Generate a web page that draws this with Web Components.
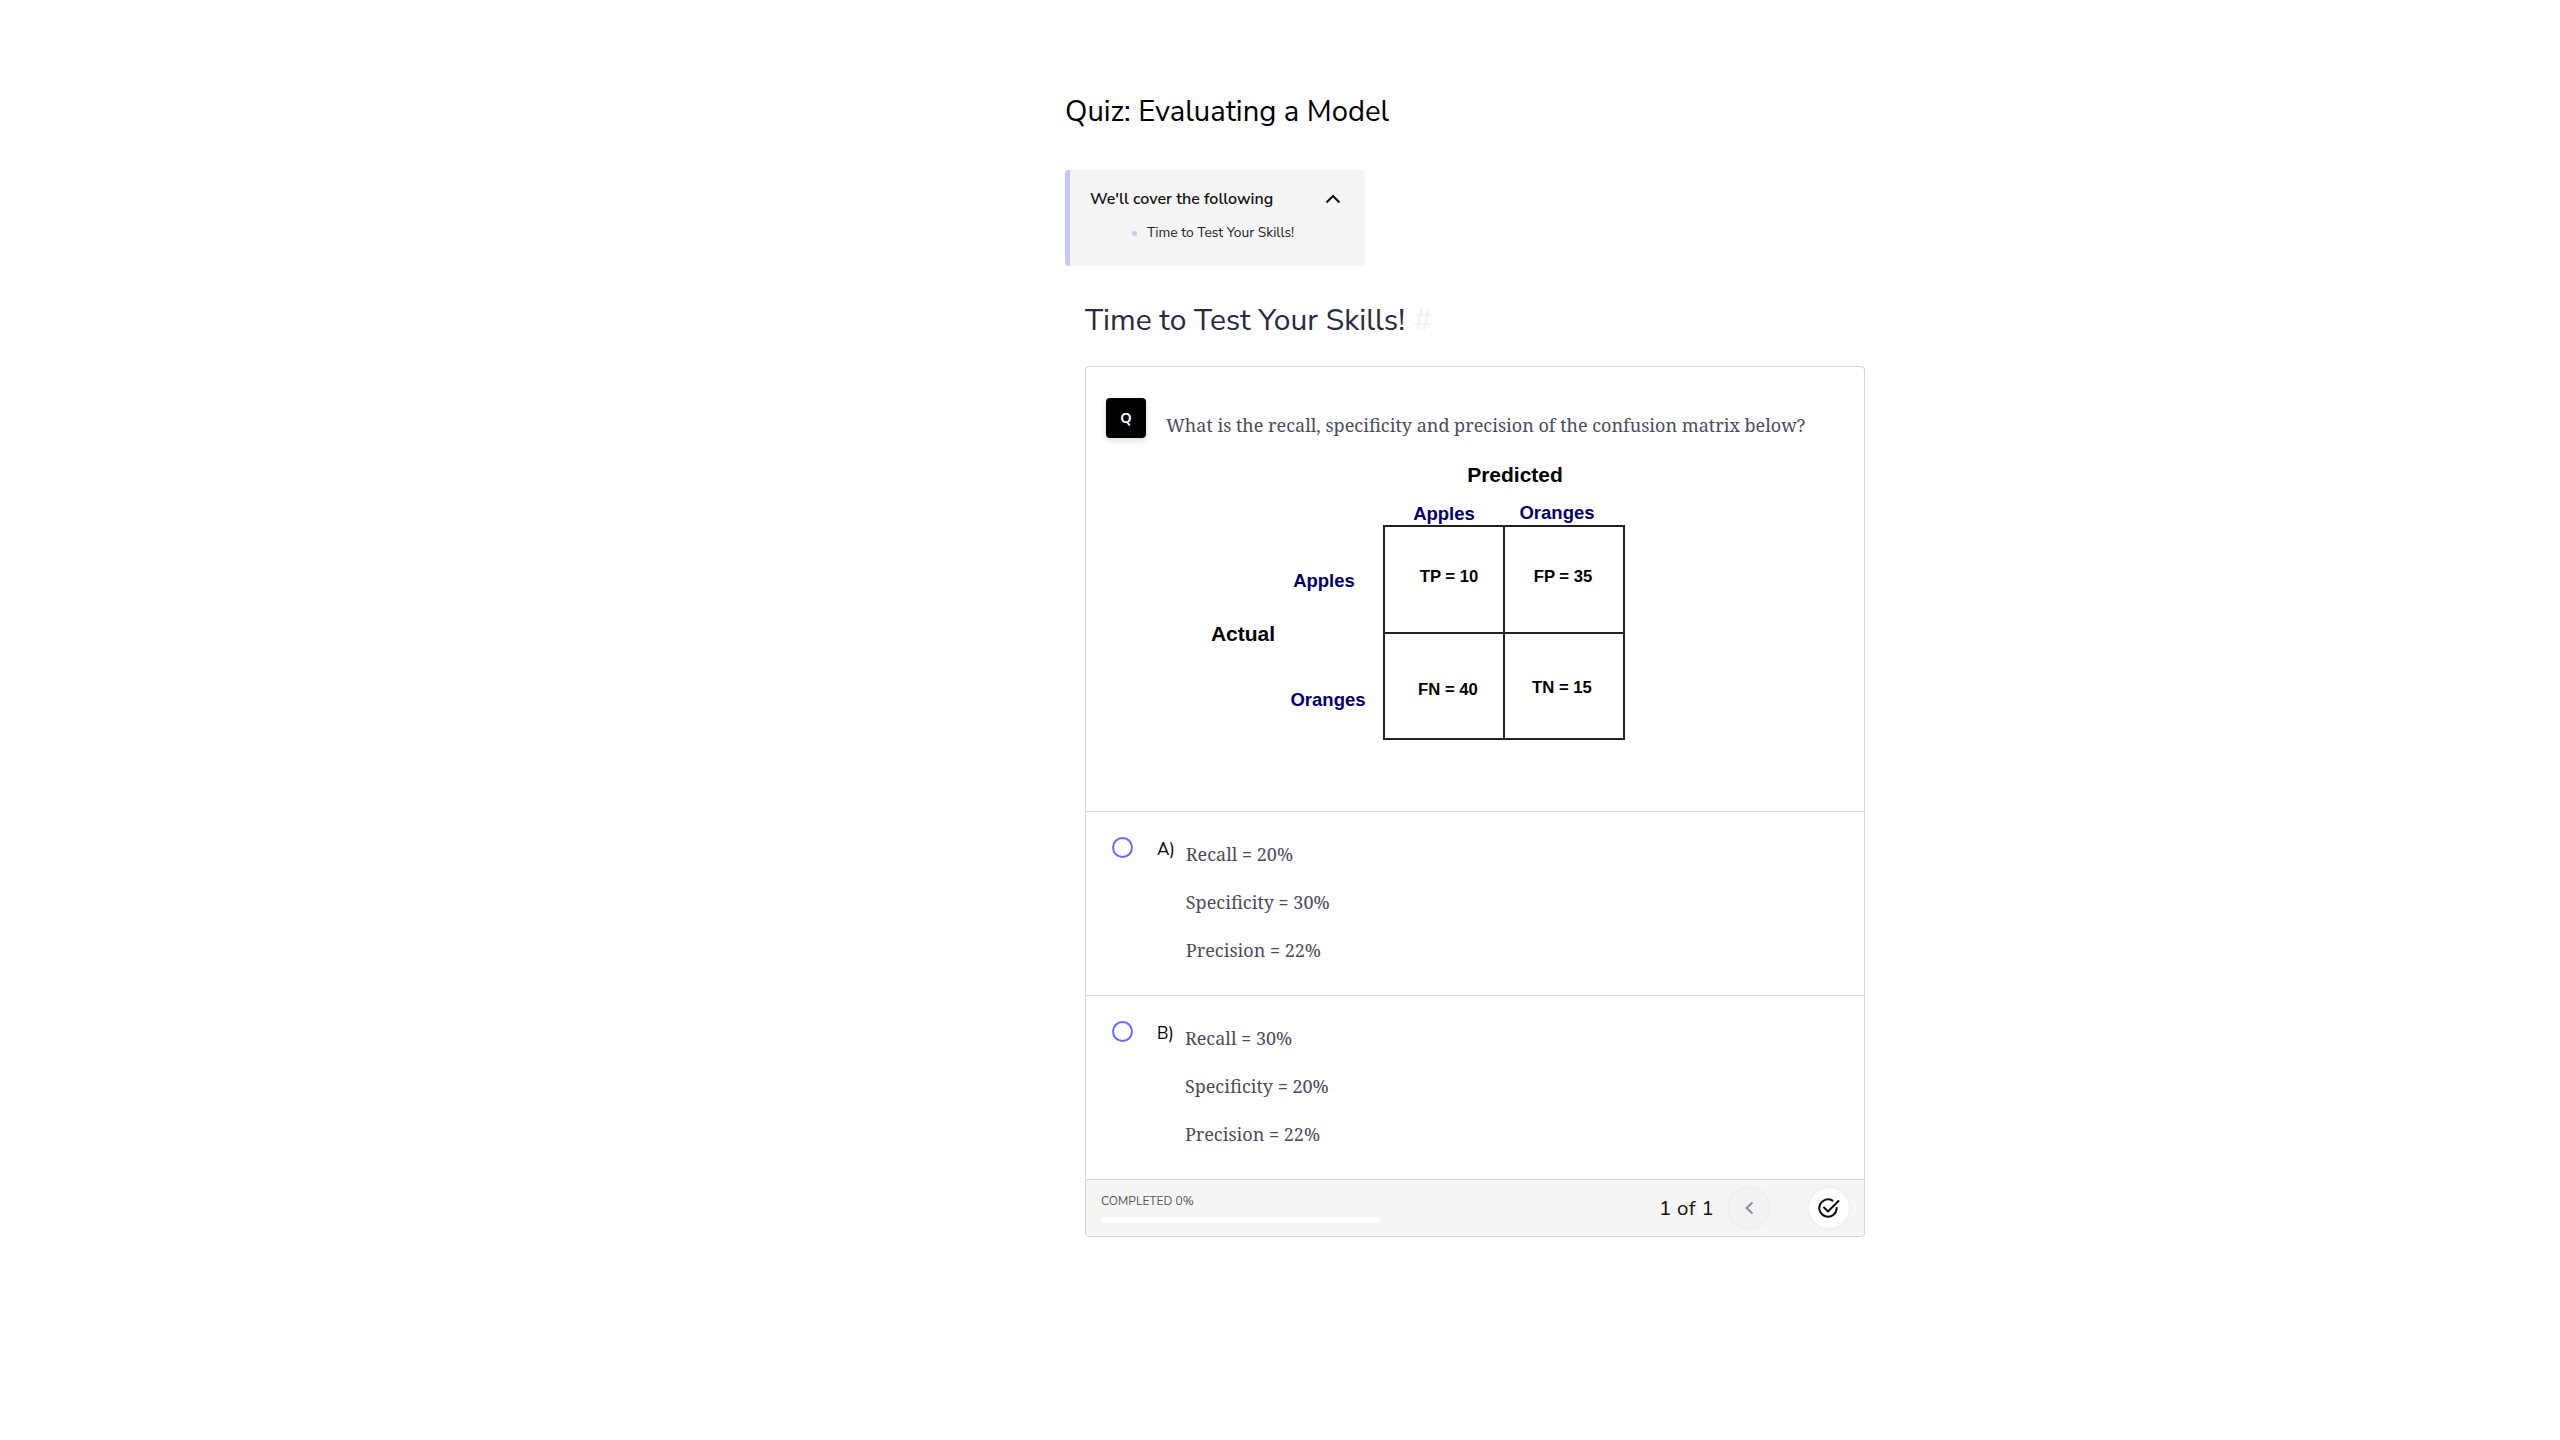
<!DOCTYPE html>
<html lang="en">
<head>
<meta charset="utf-8">
<title>Quiz: Evaluating a Model</title>
<style>
  html, body { margin: 0; background: #fff; }
</style>
</head>
<body>
<quiz-page></quiz-page>
<script>
const SANS = '"Nunito Sans", Lato, "Noto Sans", sans-serif'
const SERIF = '"Noto Serif", "DejaVu Serif", serif'

const pageTemplate = document.createElement('template')
pageTemplate.innerHTML = `
  <style>
    :host { display: block; padding: 91px 0 0 1065px; font-family: ${SANS}; }
    h1 { margin: 0; font-size: 29.2px; line-height: 40px; font-weight: 400; color: #000; }
    h2 { margin: 0; padding: 35px 0 25px 20px; font-size: 30px; line-height: 40px; font-weight: 400; color: #2a2a45; }
    h2 span { color: #f3f3f5; margin-left: 1px; }
    quiz-card { margin-left: 20px; }
  </style>
  <h1>Quiz: Evaluating a Model</h1>
  <cover-box title="We'll cover the following">Time to Test Your Skills!</cover-box>
  <h2>Time to Test Your Skills! <span>#</span></h2>
  <quiz-card></quiz-card>
`
customElements.define('quiz-page', class extends HTMLElement {
  constructor () {
    super()
    this.attachShadow({ mode: 'open' }).appendChild(pageTemplate.content.cloneNode(true))
  }
})

const coverTemplate = document.createElement('template')
coverTemplate.innerHTML = `
  <style>
    :host { display: block; box-sizing: border-box; width: 300px; height: 96px; margin-top: 39px; padding: 17px 24px 0 20px; background: #f5f5f5; border-left: 5px solid #c6c6ff; border-radius: 4px; color: #111; }
    header { display: flex; justify-content: space-between; align-items: center; height: 24px; font-size: 16px; font-weight: 600; }
    svg { width: 16px; height: 10px; display: block; }
    ul { margin: 12px 0 0; padding: 0 0 0 42px; display: flex; align-items: center; gap: 10px; font-size: 13.8px; line-height: 20px; list-style: none; color: #222; }
    i { width: 5px; height: 5px; border-radius: 50%; background: #c6c6ff; }
  </style>
  <header>
    <span id="title"></span>
    <svg viewBox="0 0 16 10" fill="none" stroke="#111" stroke-width="2"><path d="M1.5 8.5 8 2l6.500 6.500"/></svg>
  </header>
  <ul><i></i><li><slot></slot></li></ul>
`
customElements.define('cover-box', class extends HTMLElement {
  constructor () {
    super()
    this.attachShadow({ mode: 'open' }).appendChild(coverTemplate.content.cloneNode(true))
    this.shadowRoot.querySelector('#title').textContent = this.getAttribute('title')
  }
})

const matrixTemplate = document.createElement('template')
matrixTemplate.innerHTML = `
  <style>
    :host { display: block; width: 520px; height: 300px; margin: 0 0 0 97.5px; }
    svg { display: block; }
    text { font-family: "Liberation Sans", Arial, sans-serif; font-weight: 700; text-anchor: middle; dominant-baseline: central; fill: #000; }
    .big { font-size: 21px; }
    .head { font-size: 18.5px; fill: #000066; }
    .cell { font-size: 16.7px; }
    path { fill: none; stroke: #222; stroke-width: 2; }
  </style>
  <svg width="520" height="300" viewBox="1205 460 520 300">
    <path d="M1385 527h240v213h-240zM1505 527v213M1385 634h240"/>
    <text class="big" x="1516" y="475">Predicted</text>
    <text class="head" x="1445" y="514">Apples</text>
    <text class="head" x="1558" y="513">Oranges</text>
    <text class="head" x="1325" y="581">Apples</text>
    <text class="big" x="1244" y="634">Actual</text>
    <text class="head" x="1329" y="700">Oranges</text>
    <text class="cell" x="1450" y="577">TP = 10</text>
    <text class="cell" x="1564" y="577">FP = 35</text>
    <text class="cell" x="1449" y="690">FN = 40</text>
    <text class="cell" x="1563" y="688">TN = 15</text>
  </svg>
`
customElements.define('confusion-matrix', class extends HTMLElement {
  constructor () {
    super()
    this.attachShadow({ mode: 'open' }).appendChild(matrixTemplate.content.cloneNode(true))
  }
})

const optionTemplate = document.createElement('template')
optionTemplate.innerHTML = `
  <style>
    :host { display: flex; box-sizing: border-box; height: 184px; padding: 25px 0 0 26px; border-top: 1px solid #d4d4d4; }
    .radio { flex: none; box-sizing: border-box; width: 21px; height: 21px; border: 2px solid #6a6aff; border-radius: 50%; }
    .letter { flex: none; margin-left: 24px; margin-right: 11px; padding-top: 2px; font: 17px/22px ${SANS}; color: #000; }
    .lines { font: 18px/24px ${SERIF}; color: #4b4b5c; padding-top: 5px; }
    ::slotted(p) { margin: 0 0 24px; }
  </style>
  <div class="radio"></div>
  <div class="letter"></div>
  <div class="lines"><slot></slot></div>
`
customElements.define('quiz-option', class extends HTMLElement {
  constructor () {
    super()
    this.attachShadow({ mode: 'open' }).appendChild(optionTemplate.content.cloneNode(true))
    this.shadowRoot.querySelector('.letter').textContent = this.getAttribute('letter')
  }
})

const footerTemplate = document.createElement('template')
footerTemplate.innerHTML = `
  <style>
    :host { display: flex; align-items: center; height: 57px; padding: 0 15px 0 15px; box-sizing: border-box; background: #f5f5f5; border-top: 1px solid #d4d4d4; font-family: ${SANS}; }
    .progress { width: 280px; margin-top: -1px; }
    .label { font-size: 12px; line-height: 16px; color: #555; }
    .bar { height: 6px; margin-top: 8px; border-radius: 3px; background: #fff; }
    .count { margin-left: auto; font-size: 20.5px; letter-spacing: .3px; color: #111; }
    button { width: 40px; height: 40px; padding: 0; border: 0; border-radius: 50%; display: flex; align-items: center; justify-content: center; box-shadow: 0 0 4px rgba(0,0,0,.07); }
    .prev { margin-left: 15px; background: #f3f3f4; }
    .done { margin-left: 40px; background: #fff; }
  </style>
  <div class="progress">
    <div class="label">COMPLETED 0%</div>
    <div class="bar"></div>
  </div>
  <span class="count">1 of 1</span>
  <button class="prev" aria-label="Previous">
    <svg width="20" height="20" viewBox="0 0 20 20" fill="none" stroke="#8a8a94" stroke-width="2"><path d="M13.500 4.500 7.500 10l6 5.500"/></svg>
  </button>
  <button class="done" aria-label="Finish">
    <svg width="24" height="24" viewBox="0 0 24 24" fill="none" stroke="#111" stroke-width="2" stroke-linecap="round" stroke-linejoin="round"><path d="M19.700 12a8.700 8.700 0 1 1-4.200-7.400"/><path d="M7 11.500l4 4L21.500 5"/></svg>
  </button>
`
customElements.define('quiz-footer', class extends HTMLElement {
  constructor () {
    super()
    this.attachShadow({ mode: 'open' }).appendChild(footerTemplate.content.cloneNode(true))
  }
})

const cardTemplate = document.createElement('template')
cardTemplate.innerHTML = `
  <style>
    :host { display: block; box-sizing: border-box; width: 780px; border: 1px solid #d4d4d4; border-radius: 4px; overflow: hidden; }
    .question { height: 444px; box-sizing: border-box; padding: 31px 0 0 20px; }
    .ask { display: flex; gap: 20px; height: 40px; }
    .badge { flex: none; width: 40px; height: 40px; border-radius: 4px; background: #000; color: #fff; display: flex; align-items: center; justify-content: center; font: 700 14.5px ${SANS}; box-shadow: 0 2px 6px rgba(0,0,0,.15); }
    .text { padding-top: 15px; font: 18px/24px ${SERIF}; color: #4b4b5c; white-space: nowrap; }
    confusion-matrix { margin-top: 21px; }
  </style>
  <div class="question">
    <div class="ask">
      <div class="badge">Q</div>
      <div class="text">What is the recall, specificity and precision of the confusion matrix below?</div>
    </div>
    <confusion-matrix></confusion-matrix>
  </div>
  <quiz-option letter="A)">
    <p>Recall = 20%</p><p>Specificity = 30%</p><p>Precision = 22%</p>
  </quiz-option>
  <quiz-option letter="B)">
    <p>Recall = 30%</p><p>Specificity = 20%</p><p>Precision = 22%</p>
  </quiz-option>
  <quiz-footer></quiz-footer>
`
customElements.define('quiz-card', class extends HTMLElement {
  constructor () {
    super()
    this.attachShadow({ mode: 'open' }).appendChild(cardTemplate.content.cloneNode(true))
  }
})
</script>
</body>
</html>
